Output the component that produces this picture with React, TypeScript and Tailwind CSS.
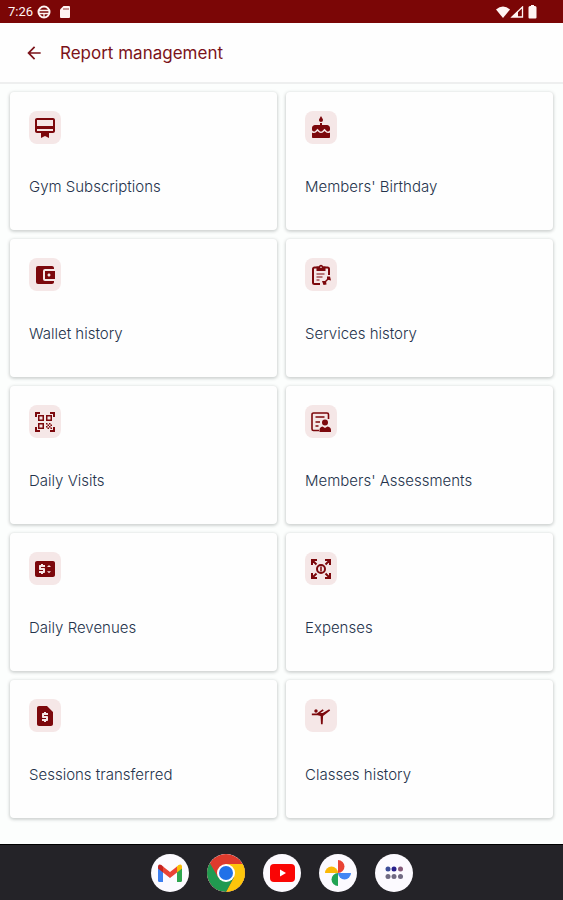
import type { ReactNode } from "react";
import {
  MdAccountBalanceWallet,
  MdArrowBack,
  MdCake,
  MdCardMembership,
  MdPriceChange,
  MdQrCodeScanner,
  MdRequestPage,
  MdSportsGymnastics,
} from "react-icons/md";

function ServicesIcon() {
  return (
    <svg viewBox="0 0 24 24" className="size-6" fill="none" stroke="currentColor" strokeWidth="2" aria-hidden="true">
      <path d="M11 21H5.500A1.500 1.500 0 0 1 4 19.500V6a1.500 1.500 0 0 1 1.500-1.500h13A1.500 1.500 0 0 1 20 6v6" />
      <path d="M7.500 3.500h2.300a2.300 2.300 0 0 1 4.400 0h2.300V8h-9z" fill="currentColor" stroke="none" />
      <circle cx="12" cy="4.200" r="0.800" fill="#f5e7e7" stroke="none" />
      <path d="M7.500 11h8M7.500 14h6M7.500 17h3" strokeWidth="1.200" />
      <path d="M15.500 19.500l4-4" strokeWidth="1.500" />
      <path d="M18 13.500h3l1 4-4-1zM13 18h4l.5 3.500-3 .5z" fill="currentColor" stroke="none" />
    </svg>
  );
}

function AssessmentsIcon() {
  return (
    <svg viewBox="0 0 24 24" className="size-6" fill="none" stroke="currentColor" aria-hidden="true">
      <path d="M10 20.500H4.500A1.500 1.500 0 0 1 3 19V4.500A1.500 1.500 0 0 1 4.500 3H18a1.500 1.500 0 0 1 1.500 1.500V9" strokeWidth="1.600" />
      <path d="M6.500 7h9M6.500 12h4.500M6.500 16h3" strokeWidth="1.500" />
      <circle cx="16" cy="12.500" r="3" fill="currentColor" stroke="none" />
      <path d="M10.500 22v-2q0-3 3-3.500l2.500 1.500 2.500-1.500q3.500 .5 3.500 3.500v2z" fill="currentColor" stroke="none" />
    </svg>
  );
}

function ExpensesIcon() {
  return (
    <svg viewBox="0 0 24 24" className="size-6" fill="none" stroke="currentColor" strokeWidth="2" aria-hidden="true">
      <path d="M3 8V3h5M16 3h5v5M21 16v5h-5M8 21H3v-5M3.500 3.500L7.500 7.500M20.500 3.500l-4 4M3.500 20.500l4-4M20.500 20.500l-4-4" />
      <circle cx="12" cy="12" r="4" />
      <path d="M12 9.500v5" strokeWidth="1.500" />
    </svg>
  );
}

const reports: { title: string; icon: ReactNode }[] = [
  { title: "Gym Subscriptions", icon: <MdCardMembership className="size-6" /> },
  { title: "Members' Birthday", icon: <MdCake className="size-6" /> },
  { title: "Wallet history", icon: <MdAccountBalanceWallet className="size-6" /> },
  { title: "Services history", icon: <ServicesIcon /> },
  { title: "Daily Visits", icon: <MdQrCodeScanner className="size-6" /> },
  { title: "Members' Assessments", icon: <AssessmentsIcon /> },
  { title: "Daily Revenues", icon: <MdPriceChange className="size-6" /> },
  { title: "Expenses", icon: <ExpensesIcon /> },
  { title: "Sessions transferred", icon: <MdRequestPage className="size-6" /> },
  { title: "Classes history", icon: <MdSportsGymnastics className="size-5" /> },
];

function StatusBar() {
  return (
    <div className="flex h-[23px] items-center justify-between bg-[#7b0606] pr-[26px] pl-2 text-[#fff5f3]">
      <div className="flex items-center gap-2">
        <div className="flex items-center gap-1">
          <span className="font-[Roboto,sans-serif] text-[13px] leading-5">7:26</span>
          <svg viewBox="0 0 14 14" className="size-[14px]" fill="none" stroke="currentColor" strokeWidth="2" aria-hidden="true">
            <circle cx="7" cy="7" r="5.500" />
            <path d="M2 5.500h10M2 8.500h10" strokeWidth="1.300" />
            <path d="M7 8.500v4" strokeWidth="1.300" />
          </svg>
        </div>
        <svg viewBox="0 0 12 14" className="h-[14px] w-3" fill="currentColor" aria-hidden="true">
          <path d="M4.500 1H10a1 1 0 0 1 1 1v10a1 1 0 0 1-1 1H2a1 1 0 0 1-1-1V4.500z" />
          <path d="M5 3v2M7 3v2M9 3v2" stroke="#7b0606" strokeWidth="0.800" />
        </svg>
      </div>
      <div className="flex items-center">
        <svg viewBox="0 0 14 12" className="h-3 w-[14px]" fill="currentColor" aria-hidden="true">
          <path d="M7 12L0 3.500Q7-2.500 14 3.500z" />
        </svg>
        <svg viewBox="0 0 14 12" className="mr-1 h-3 w-[14px]" aria-hidden="true">
          <path d="M2 11L12.500 1v10z" fill="none" stroke="currentColor" strokeWidth="1.300" />
          <path d="M2 11l6-6v6z" fill="currentColor" />
        </svg>
        <svg viewBox="0 0 9 14" className="h-[14px] w-[9px]" fill="currentColor" aria-hidden="true">
          <path d="M3 0h3v1h1a1.500 1.500 0 0 1 1.500 1.500v10A1 1 0 0 1 7.500 13.500h-6a1 1 0 0 1-1-1v-10A1.500 1.500 0 0 1 2 1h1z" />
        </svg>
      </div>
    </div>
  );
}

function GmailLogo() {
  return (
    <svg viewBox="0 0 38 38" className="size-full" aria-hidden="true">
      <path d="M7 12v14.500q0 1.500 1.500 1.500H12V16z" fill="#3d7ff0" />
      <path d="M26 16v12h3.500q1.500 0 1.500-1.500V12z" fill="#2fa64f" />
      <path d="M26 12.500v6l5-4v-1.500q0-3.500-3.500-2z" fill="#fbbc04" />
      <path d="M7 13v1.500l5 4v-6L10.500 11Q7 9.500 7 13z" fill="#c5221f" />
      <path d="M12 12.500v6l7 5.500 7-5.500v-6l-7 5.500z" fill="#ea4335" />
    </svg>
  );
}

function ChromeLogo() {
  return (
    <svg viewBox="0 0 38 38" className="size-full" aria-hidden="true">
      <circle cx="19" cy="19" r="19" fill="#de3b2d" />
      <path d="M19 10h17.500a19 19 0 0 1-17.500 28l7.800-14.500z" fill="#fdc60c" />
      <path d="M11.200 23.500L2.800 9A19 19 0 0 0 19 38l7.800-14.500z" fill="#219a50" />
      <circle cx="19" cy="19" r="9" fill="#fff" />
      <circle cx="19" cy="19" r="7" fill="#2071e8" />
    </svg>
  );
}

function YoutubeLogo() {
  return (
    <svg viewBox="0 0 38 38" className="size-full" aria-hidden="true">
      <rect x="7" y="10" width="25" height="18" rx="4" fill="#fa0505" />
      <path d="M17 15.500v7l6-3.500z" fill="#fff" />
    </svg>
  );
}

function PhotosLogo() {
  return (
    <svg viewBox="0 0 38 38" className="size-full" aria-hidden="true">
      <path d="M19 6a6.500 6.500 0 0 1 0 13z" fill="#e94335" />
      <path d="M32 19a6.500 6.500 0 0 1-13 0z" fill="#4285f4" />
      <path d="M19 32a6.500 6.500 0 0 1 0-13z" fill="#22a454" />
      <path d="M6 19a6.500 6.500 0 0 1 13 0z" fill="#fbb806" />
    </svg>
  );
}

function AllAppsLogo() {
  return (
    <svg viewBox="0 0 38 38" className="size-full" aria-hidden="true">
      <circle cx="13" cy="15" r="2.500" fill="#3c4d99" />
      <circle cx="19" cy="15" r="2.500" fill="#28208b" />
      <circle cx="25.500" cy="15" r="2.500" fill="#865b7a" />
      <g fill="#706a82">
        <circle cx="13" cy="22.500" r="2.500" />
        <circle cx="19" cy="22.500" r="2.500" />
        <circle cx="25.500" cy="22.500" r="2.500" />
      </g>
    </svg>
  );
}

const apps = [
  { name: "Gmail", logo: <GmailLogo /> },
  { name: "Chrome", logo: <ChromeLogo /> },
  { name: "YouTube", logo: <YoutubeLogo /> },
  { name: "Photos", logo: <PhotosLogo /> },
  { name: "All apps", logo: <AllAppsLogo /> },
];

export default function App() {
  return (
    <div className="flex min-h-screen flex-col bg-[#fcfefd] font-[Inter,sans-serif]">
      <StatusBar />
      <header className="flex h-[61px] items-center gap-4 border-b-2 border-[#eeefef] bg-[#fefefe] px-6 text-[#7b1219]">
        <button type="button" aria-label="Back" className="flex size-5 items-center justify-center">
          <MdArrowBack className="size-5" />
        </button>
        <h1 className="text-[17px] leading-6 font-normal">Report management</h1>
      </header>
      <main className="grid grow grid-cols-2 content-start gap-[9px] px-[10px] pt-2 pb-6">
        {reports.map((report) => (
          <button
            key={report.title}
            type="button"
            className="flex h-[138px] flex-col items-start gap-[33px] rounded-sm bg-[#fefefe] px-[19px] pt-[19px] text-left shadow-[0_1px_3px_1px_rgba(60,70,70,0.22)]"
          >
            <span className="flex h-[33px] w-8 items-center justify-center rounded-lg bg-[#f5e7e7] text-[#7c080c]">
              {report.icon}
            </span>
            <span className="text-[15px] leading-5 font-light text-[#25334c]">{report.title}</span>
          </button>
        ))}
      </main>
      <nav aria-label="Apps" className="flex h-14 items-center justify-center gap-[18px] border-t border-black bg-[#242328]">
        {apps.map((app) => (
          <button key={app.name} type="button" aria-label={app.name} className="size-[38px] overflow-hidden rounded-full bg-[#fcfaff]">
            {app.logo}
          </button>
        ))}
      </nav>
    </div>
  );
}
